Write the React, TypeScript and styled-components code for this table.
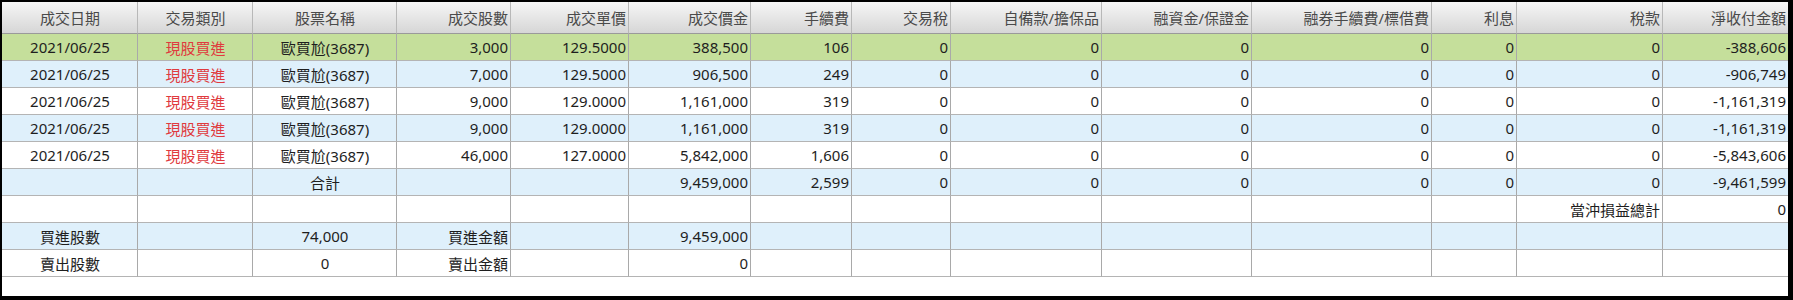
import * as React from "react";
import styled, { createGlobalStyle, css } from "styled-components";

const GlobalStyle = createGlobalStyle`
    html, body { margin: 0; padding: 0; background: #000; }
    body { font-family: "Noto Sans", "Noto Sans CJK TC", sans-serif; }
`;

const COLUMNS = "136px 115px 144px 114px 118px 122px 101px 99px 151px 150px 180px 85px 146px 1fr";

type Align = "left" | "center" | "right";
type Tone = "white" | "blue" | "green";

const Frame = styled.div`
    width: 1793px;
    height: 300px;
    box-sizing: border-box;
    background: #000;
    padding: 2px 5px 4px 2px;
`;

const Panel = styled.div`
    width: 100%;
    height: 100%;
    background: #fff;
    overflow: hidden;
`;

const Row = styled.div<{ tone?: Tone; header?: boolean }>`
    display: grid;
    grid-template-columns: ${COLUMNS};
    height: 27px;
    ${({ tone }) => tone === "blue" && "background: #dff0fb;"}
    ${({ tone }) => tone === "green" && "background: #c5df9b;"}
    ${({ header }) =>
        header &&
        css`
            height: 32px;
            background: linear-gradient(#f6f6f6, #d5d5d5);
        `}
`;

const Cell = styled.div<{ align?: Align; header?: boolean; red?: boolean }>`
    box-sizing: border-box;
    border-right: 1px solid #a9a9a9;
    border-bottom: 1px solid #b4b4b4;
    padding: 0 2px 0 3px;
    display: flex;
    align-items: center;
    justify-content: ${({ align }) => (align === "center" ? "center" : align === "left" ? "flex-start" : "flex-end")};
    font-size: 15px;
    color: ${({ red }) => (red ? "#e03a3e" : "#1e1e1e")};
    white-space: nowrap;
    overflow: hidden;
    &:last-child { border-right: none; }
    ${({ header }) =>
        header &&
        css`
            color: #4a4a4a;
            border-right-color: #b8b8b8;
            border-bottom-color: #9a9a9a;
        `}
`;

const headers: [string, Align][] = [
    ["成交日期", "center"],
    ["交易類別", "center"],
    ["股票名稱", "center"],
    ["成交股數", "right"],
    ["成交單價", "right"],
    ["成交價金", "right"],
    ["手續費", "right"],
    ["交易稅", "right"],
    ["自備款/擔保品", "right"],
    ["融資金/保證金", "right"],
    ["融券手續費/標借費", "right"],
    ["利息", "right"],
    ["稅款", "right"],
    ["淨收付金額", "right"],
];

const trades = [
    ["3,000", "129.5000", "388,500", "106", "-388,606"],
    ["7,000", "129.5000", "906,500", "249", "-906,749"],
    ["9,000", "129.0000", "1,161,000", "319", "-1,161,319"],
    ["9,000", "129.0000", "1,161,000", "319", "-1,161,319"],
    ["46,000", "127.0000", "5,842,000", "1,606", "-5,843,606"],
];

const tones: Tone[] = ["green", "blue", "white", "blue", "white"];

type CellDef = { text?: string; align?: Align; red?: boolean };

const blank = (n: number): CellDef[] => Array.from({ length: n }, () => ({}));
const zeros = (n: number): CellDef[] => Array.from({ length: n }, () => ({ text: "0" }));

const summaryRows: { tone: Tone; cells: CellDef[] }[] = [
    {
        tone: "blue",
        cells: [
            {}, {}, { text: "合計", align: "center" }, {}, {},
            { text: "9,459,000" }, { text: "2,599" }, ...zeros(6), { text: "-9,461,599" },
        ],
    },
    {
        tone: "white",
        cells: [...blank(12), { text: "當沖損益總計" }, { text: "0" }],
    },
    {
        tone: "blue",
        cells: [
            { text: "買進股數", align: "center" }, {}, { text: "74,000", align: "center" },
            { text: "買進金額" }, {}, { text: "9,459,000" }, ...blank(8),
        ],
    },
    {
        tone: "white",
        cells: [
            { text: "賣出股數", align: "center" }, {}, { text: "0", align: "center" },
            { text: "賣出金額" }, {}, { text: "0" }, ...blank(8),
        ],
    },
];

const App: React.FC = () => {
    return (
        <Frame>
            <GlobalStyle />
            <Panel>
                <Row header>
                    {headers.map(([label, align]) => (
                        <Cell key={label} header align={align}>{label}</Cell>
                    ))}
                </Row>
                {trades.map((t, i) => {
                    const cells: CellDef[] = [
                        { text: "2021/06/25", align: "center" },
                        { text: "現股買進", align: "center", red: true },
                        { text: "歐買尬(3687)", align: "center" },
                        { text: t[0] }, { text: t[1] }, { text: t[2] }, { text: t[3] },
                        ...zeros(6),
                        { text: t[4] },
                    ];
                    return (
                        <Row key={i} tone={tones[i]}>
                            {cells.map((c, j) => (
                                <Cell key={j} align={c.align} red={c.red}>{c.text}</Cell>
                            ))}
                        </Row>
                    );
                })}
                {summaryRows.map((r, i) => (
                    <Row key={`s${i}`} tone={r.tone}>
                        {r.cells.map((c, j) => (
                            <Cell key={j} align={c.align}>{c.text}</Cell>
                        ))}
                    </Row>
                ))}
            </Panel>
        </Frame>
    );
};

export default App;
